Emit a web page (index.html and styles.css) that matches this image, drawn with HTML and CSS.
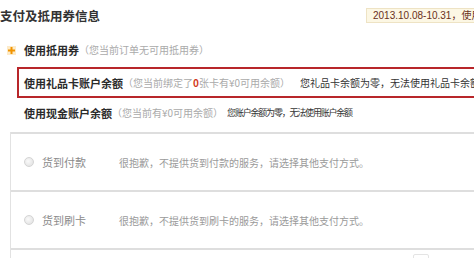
FILE: index.html
```html
<!DOCTYPE html>
<html lang="zh-CN">
<head>
<meta charset="utf-8">
<link rel="stylesheet" href="styles.css">
</head>
<body>
<div class="page">
  <div class="header">
    <h2 class="title">支付及抵用券信息</h2>
    <div class="promo">2013.10.08-10.31，使用礼品卡支付</div>
  </div>

  <div class="row coupon">
    <svg class="plus" width="9" height="9" viewBox="0 0 9 9"><rect width="9" height="9" fill="#fdebc9"/><rect x="3.5" y="1" width="2" height="7" fill="#f29400"/><rect x="1" y="3.5" width="7" height="2" fill="#f29400"/></svg>
    <span class="strong">使用抵用券</span><span class="muted">（您当前订单无可用抵用券）</span>
  </div>

  <div class="row giftcard">
    <span class="strong">使用礼品卡账户余额</span><span class="muted">（您当前绑定了<em class="num">0</em>张卡有¥0可用余额）</span><span class="msg">您礼品卡余额为零，无法使用礼品卡余额</span>
  </div>

  <div class="row cash">
    <span class="strong">使用现金账户余额</span><span class="muted">（您当前有¥0可用余额）</span><span class="msg small">您账户余额为零，无法使用账户余额</span>
  </div>

  <div class="methods">
    <div class="method">
      <span class="radio"></span>
      <span class="label">货到付款</span>
      <span class="desc">很抱歉，不提供货到付款的服务，请选择其他支付方式。</span>
    </div>
    <div class="method">
      <span class="radio"></span>
      <span class="label">货到刷卡</span>
      <span class="desc">很抱歉，不提供货到刷卡的服务，请选择其他支付方式。</span>
    </div>
    <div class="method last">
      <span class="chip"></span>
    </div>
  </div>
</div>
</body>
</html>
```

FILE: styles.css
```css
html, body {
  margin: 0;
  padding: 0;
  background: #fff;
  overflow: hidden;
}

body {
  width: 474px;
  height: 258px;
  font-family: "Noto Sans CJK SC", "Liberation Sans", sans-serif;
  font-size: 11px;
  color: #333;
}

.page {
  width: 640px;
}

.header {
  display: grid;
  grid-template-columns: 366px auto;
  align-items: start;
  padding-top: 8px;
  height: 16px;
}

.title {
  margin: 0;
  font-size: 12.5px;
  line-height: 16px;
  font-weight: bold;
  color: #333;
  white-space: nowrap;
}

.promo {
  height: 13px;
  line-height: 13px;
  padding: 0 6px;
  background: #fcf7e4;
  border: 1px solid #eee3c4;
  color: #6a2f20;
  font-family: "Liberation Sans", "Noto Sans CJK SC", sans-serif;
  font-size: 10px;
  white-space: nowrap;
}

.row {
  display: flex;
  align-items: center;
  white-space: nowrap;
  line-height: 16px;
}

.strong {
  font-weight: bold;
  color: #2b2b2b;
}

.muted {
  color: #aaa;
  font-size: 10px;
}

.num {
  font-style: normal;
  color: #d23c1e;
  font-weight: bold;
}

.msg {
  margin-left: 10px;
  color: #333;
  font-size: 10px;
}

.msg.small {
  margin-left: 4px;
  font-size: 9px;
  letter-spacing: -1.2px;
}

.coupon {
  margin-top: 18px;
  padding-left: 7px;
}

.plus {
  margin-right: 8px;
  flex: none;
}

.giftcard {
  margin-top: 9px;
  margin-left: 17px;
  height: 27px;
  padding-left: 5px;
  border: 2px solid #b8262a;
}

.cash {
  margin-top: 7px;
  padding-left: 24px;
}

.methods {
  margin-top: 11px;
  margin-left: 10px;
  border-left: 1px solid #e2e2e2;
}

.method {
  display: flex;
  align-items: center;
  height: 56px;
  border-top: 2px solid #dedede;
  padding-left: 13px;
  white-space: nowrap;
}

.radio {
  width: 8px;
  height: 8px;
  border-radius: 50%;
  border: 1px solid #d4d4d4;
  background: radial-gradient(circle at 40% 40%, #fafafa 0, #e6e6e6 70%);
  margin-right: 8px;
  flex: none;
}

.label {
  width: 77px;
  color: #8a8a8a;
}

.desc {
  color: #9a9a9a;
  font-size: 10px;
}

.method.last {
  align-items: flex-start;
  padding-left: 402px;
}

.chip {
  margin-top: 4px;
  width: 14px;
  height: 10px;
  border: 1px solid #e4e4e4;
  border-radius: 2px;
}
```
